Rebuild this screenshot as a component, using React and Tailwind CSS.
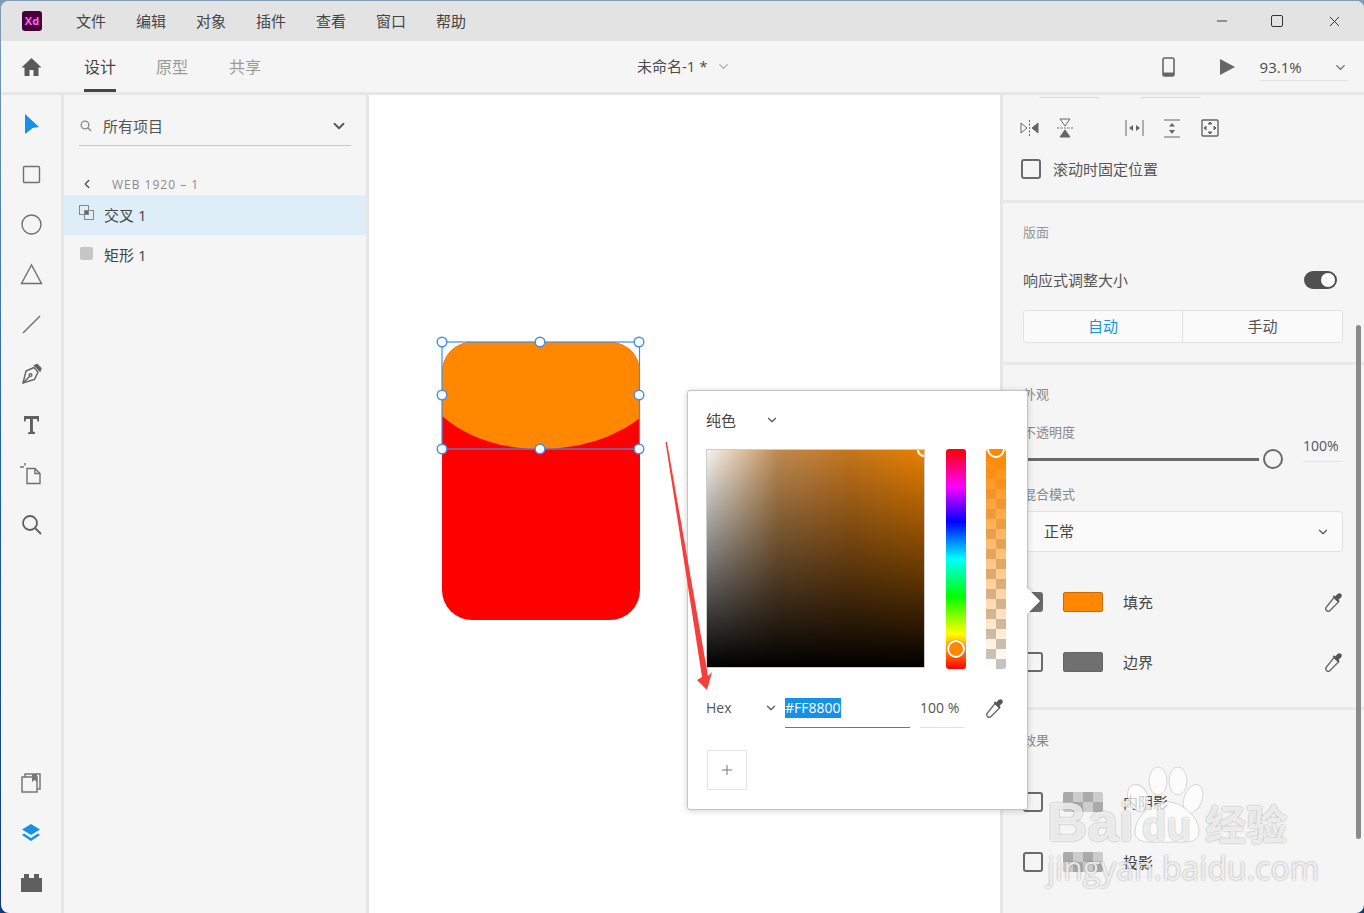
import React from 'react';
import { ChevronDown, ChevronLeft, Minus, X, Plus } from 'lucide-react';

const menus = ['文件', '编辑', '对象', '插件', '查看', '窗口', '帮助'];

function Pipette() {
  return (
    <svg width="20" height="20" viewBox="0 0 20 20" fill="none">
      <path d="M10 5.500 14.500 10 6 18.500c-1 1-2.500 1-3.500 0s-1-2.500 0-3.500z" stroke="#666" strokeWidth="1.300" />
      <path d="M8.800 4.500 10 3.300l1.200 1.200 2.300-2.500c1-1 2.600-1.100 3.600-.1s.9 2.600-.1 3.600l-2.500 2.300 1.200 1.200-1.200 1.200z" fill="#555" />
    </svg>
  );
}

function Check({ checked = false }) {
  return <div className={`w-5 h-5 shrink-0 rounded-[3px] border-2 border-[#6a6a6a] ${checked ? 'bg-[#6a6a6a]' : ''}`} />;
}

const toolIcon = {
  select: <path d="M5 1 19 14l-6.500 1-1 1L5 21z" fill="#1592e6" />,
  rect: <rect x="3.500" y="3.500" width="16" height="16" rx="1" fill="none" stroke="#707070" strokeWidth="1.400" />,
  circle: <circle cx="11.500" cy="11.500" r="9.500" fill="none" stroke="#707070" strokeWidth="1.400" />,
  triangle: <path d="M11.500 2 1.500 20.500h20z" fill="none" stroke="#707070" strokeWidth="1.400" />,
  line: <path d="M3 20 20 3" stroke="#707070" strokeWidth="1.400" />,
  pen: (
    <g fill="none" stroke="#606060" strokeWidth="1.400">
      <path d="M14 4.500 6 8 3 20l11.500-3.500L18 9z" />
      <path d="M3 20l6.500-6.500" />
      <circle cx="10.500" cy="12" r="1.400" />
      <path d="M14.500 2.500 20 8l1-2.500-3.800-4z" fill="#606060" />
    </g>
  ),
  text: <path d="M4 3h15v5.500h-1.500l-.6-2.500h-4v12.500l2 .5V21H8v-1.500l2-.5V6H6.100l-.6 2.500H4z" fill="#606060" />,
  artboard: (
    <g fill="none" stroke="#707070" strokeWidth="1.400">
      <path d="M7 5.500h8l5 5v10H7z" />
      <path d="M15 5.500v5h5" />
      <path d="M0 4h4M5 0v2.500" />
    </g>
  ),
  zoom: (
    <g fill="none" stroke="#606060" strokeWidth="1.800">
      <circle cx="10" cy="10" r="7" />
      <path d="m15 15 6 6" />
    </g>
  ),
};

function ToolButton({ icon }) {
  return (
    <div className="h-[50px] flex items-center justify-center">
      <svg width="23" height="23" viewBox="0 0 23 23">{toolIcon[icon]}</svg>
    </div>
  );
}

function PropsRow({ swatch, label, top = '', checked = false, picker = true }) {
  return (
    <div className={`flex items-center h-5 pl-5 pr-[20px] ${top}`}>
      <Check checked={checked} />
      <div className={`w-10 h-5 ml-5 rounded-[2px] ${swatch}`} />
      <span className="ml-5 text-[15px] text-[#444]">{label}</span>
      {picker && <span className="ml-auto"><Pipette /></span>}
    </div>
  );
}

const checker = 'bg-[repeating-conic-gradient(#cccccc_0_25%,#aaaaaa_0_50%)] bg-[length:20px_20px]';

export default function App() {
  return (
    <div className="relative w-[1364px] h-[913px] overflow-hidden bg-gradient-to-b from-[#7f9db5] via-[#1f5fb0] to-[#123a78] pl-px pt-px font-['Open_Sans','Noto_Sans_CJK_SC',sans-serif]">
      <div className="h-full flex flex-col rounded-lg overflow-hidden bg-[#f5f5f5]">
        {/* title bar */}
        <div className="h-10 shrink-0 bg-[#e3e3e3] flex items-center text-[15px] text-[#444]">
          <div className="ml-[21px] w-5 h-5 rounded-[3px] bg-[#470137] flex items-center justify-center text-[11px] font-bold text-[#ff61f6]">Xd</div>
          <div className="ml-[34px] flex">
            {menus.map((m) => (
              <span key={m} className="w-[60px]">{m}</span>
            ))}
          </div>
          <div className="ml-auto flex items-center text-[#333]">
            <Minus size={16} strokeWidth={1.400} className="mr-[41px]" />
            <div className="w-[12px] h-[12px] border border-[#333] rounded-[2px] mr-[43px]" />
            <X size={17} strokeWidth={1.400} className="mr-[21px]" />
          </div>
        </div>

        {/* toolbar */}
        <div className="h-[54px] shrink-0 flex items-center border-b-[3px] border-[#e6e6e6] relative">
          <svg className="ml-[20px]" width="21" height="20" viewBox="0 0 21 20">
            <path d="M10.500 1 .5 10.500h3V19h5v-6h4v6h5v-8.500h3z" fill="#5a5a5a" />
          </svg>
          <div className="ml-[42px] h-full flex items-center relative text-base text-[#444]">
            <span>设计</span>
            <div className="absolute left-0 right-0 bottom-0 h-[3px] bg-[#444]" />
          </div>
          <span className="ml-10 text-base text-[#9a9a9a]">原型</span>
          <span className="ml-[41px] text-base text-[#9a9a9a]">共享</span>
          <span className="ml-[376px] text-[15px] text-[#4b4b4b]">未命名-1 *</span>
          <ChevronDown size={15} className="ml-2 text-[#aaa]" />
          <svg className="ml-[431px]" width="14" height="20" viewBox="0 0 14 20">
            <rect x="1" y="1" width="11" height="18" rx="1.500" fill="none" stroke="#666" strokeWidth="1.600" />
            <path d="M1 15.500h11v2.500a1 1 0 0 1-1 1H2a1 1 0 0 1-1-1z" fill="#666" />
          </svg>
          <svg className="ml-[43px]" width="17" height="18" viewBox="0 0 17 18">
            <path d="M1 1v16l15-8z" fill="#666" />
          </svg>
          <div className="ml-6 w-[88px] h-[26px] flex items-center justify-between border-b border-[#e2e2e2] self-end mb-[11px] text-[15px] text-[#4b4b4b]">
            <span>93.1%</span>
            <ChevronDown size={15} className="text-[#666]" />
          </div>
        </div>

        {/* main */}
        <div className="flex-1 flex min-h-0">
          {/* tools */}
          <div className="w-[60px] shrink-0 flex flex-col pt-1">
            {['select', 'rect', 'circle', 'triangle', 'line', 'pen', 'text', 'artboard', 'zoom'].map((t) => (
              <ToolButton key={t} icon={t} />
            ))}
            <div className="mt-auto pb-[5px] flex flex-col">
              <div className="h-[50px] flex items-center justify-center">
                <svg width="20" height="20" viewBox="0 0 20 20" fill="none" stroke="#777" strokeWidth="1.500">
                  <path d="M4 4V1h15v15h-3" />
                  <rect x="1" y="4" width="15" height="15" />
                  <path d="M11 1h5v8l-2.500-2L11 9z" fill="#777" stroke="none" />
                </svg>
              </div>
              <div className="h-[50px] flex items-center justify-center">
                <svg width="20" height="20" viewBox="0 0 20 20">
                  <path d="M10 1 19 6.500 10 12 1 6.500z" fill="#1592e6" />
                  <path d="M3 10.500 10 15l7-4.500 2 1.500-9 6-9-6z" fill="#1592e6" />
                </svg>
              </div>
              <div className="h-[50px] flex items-center justify-center">
                <svg width="23" height="20" viewBox="0 0 23 20">
                  <path d="M1 19V5h3V1h5v4h5V1h5v4h3v14z" fill="#5f5f5f" />
                </svg>
              </div>
            </div>
          </div>
          <div className="w-[3px] shrink-0 bg-[#e6e6e6]" />

          {/* layers */}
          <div className="w-[302px] shrink-0">
            <div className="mx-[15px] mt-[15px] h-9 flex items-center border-b border-[#c8c8c8] pb-[3px]">
              <svg width="12" height="12" viewBox="0 0 12 12" fill="none" stroke="#888" strokeWidth="1.300" className="ml-px">
                <circle cx="5" cy="5" r="3.800" />
                <path d="m8 8 3 3" />
              </svg>
              <span className="ml-[11px] text-[15px] text-[#555]">所有项目</span>
              <ChevronDown size={18} strokeWidth={2.400} className="ml-auto mr-[3px] text-[#555]" />
            </div>
            <div className="h-[49px] flex items-end pb-[2px] pl-[16px]">
              <ChevronLeft size={14} strokeWidth={2.400} className="text-[#555] mb-[2px]" />
              <span className="ml-[18px] text-xs tracking-[1px] text-[#8a8a8a]">WEB 1920 – 1</span>
            </div>
            <div className="h-10 bg-[#deeef9] flex items-center pl-[15px] text-[15px] text-[#444]">
              <svg width="16" height="16" viewBox="0 0 16 16" fill="none" stroke="#888" strokeWidth="1" className="mb-1">
                <rect x="0.500" y="0.500" width="9" height="9" />
                <rect x="5.500" y="5.500" width="9" height="9" />
                <rect x="5.500" y="5.500" width="4" height="4" fill="#666" />
              </svg>
              <span className="ml-[9px]">交叉 1</span>
            </div>
            <div className="h-10 flex items-center pl-[16px] text-[15px] text-[#444]">
              <div className="w-[13px] h-[13px] rounded-[2px] bg-[#c6c6c6] mb-1" />
              <span className="ml-[11px]">矩形 1</span>
            </div>
          </div>
          <div className="w-[3px] shrink-0 bg-[#e6e6e6]" />

          {/* canvas */}
          <div className="relative w-[631px] shrink-0 bg-white">
            <svg className="absolute left-[61px] top-[235px]" width="220" height="300" viewBox="430 330 220 300">
              <rect x="442" y="342" width="198" height="278" rx="30" fill="#ff0000" />
              <path d="M442 416V372a30 30 0 0 1 30-30h138a30 30 0 0 1 30 30v46C616 437 580 449 540 449S466 437 442 416z" fill="#ff8800" />
              <rect x="442" y="342" width="197.500" height="107" fill="none" stroke="#3f8fe8" strokeWidth="1.200" />
              {[[442, 342], [540, 342], [639, 342], [442, 395], [639, 395], [442, 449], [540, 449], [639, 449]].map(([cx, cy]) => (
                <circle key={`${cx}-${cy}`} cx={cx} cy={cy} r="4.800" fill="#fff" stroke="#3f8fe8" strokeWidth="1.400" />
              ))}
            </svg>
          </div>
          <div className="w-[3px] shrink-0 bg-[#e6e6e6]" />

          {/* properties */}
          <div className="flex-1 min-w-0 text-[#555]">
            <div className="h-[108px] border-b-[3px] border-[#e8e8e8]">
              <div className="flex pt-[2px] pl-[36px]">
                <div className="w-[60px] h-px bg-[#dcdcdc]" />
                <div className="ml-[42px] w-[60px] h-px bg-[#dcdcdc]" />
              </div>
              <div className="flex items-center mt-5 pl-[17px]">
                <svg width="19" height="16" viewBox="0 0 19 16" fill="none" stroke="#666">
                  <path d="M1 3v10l6-5z" />
                  <path d="M18 3v10l-6-5z" fill="#666" />
                  <path d="M9.500 0v16" strokeDasharray="2 1.500" />
                </svg>
                <svg className="ml-[18px]" width="16" height="20" viewBox="0 0 16 20" fill="none" stroke="#666">
                  <path d="M3 1h10L8 8z" />
                  <path d="M3 19h10l-5-7z" fill="#666" />
                  <path d="M0 10h16" strokeDasharray="2 1.500" />
                </svg>
                <svg className="ml-[52px]" width="19" height="16" viewBox="0 0 19 16" fill="#666">
                  <path d="M.5 0h1v16h-1zM17.500 0h1v16h-1zM8 5v6L4 8zM11 5v6l4-3z" />
                </svg>
                <svg className="ml-[20px]" width="16" height="19" viewBox="0 0 16 19" fill="#666">
                  <path d="M0 .5h16v1H0zM0 17.500h16v1H0zM5 7.500h6L8 4zM5 11h6l-3 4z" />
                </svg>
                <svg className="ml-[21px]" width="18" height="18" viewBox="0 0 18 18" fill="none" stroke="#666">
                  <rect x="1" y="1" width="16" height="16" rx="1" strokeWidth="1.400" />
                  <path d="M7 5h4L9 3zM7 13h4l-2 2zM5 7v4L3 9zM13 7v4l2-2z" fill="#666" />
                </svg>
              </div>
              <div className="flex items-center mt-5 pl-[18px]">
                <Check />
                <span className="ml-[12px] text-[15px]">滚动时固定位置</span>
              </div>
            </div>

            <div className="h-[162px] border-b-[3px] border-[#e8e8e8] px-5 pt-[19px]">
              <div className="text-[13px] text-[#999] leading-5">版面</div>
              <div className="flex items-center justify-between mt-7 h-5">
                <span className="text-[15px]">响应式调整大小</span>
                <div className="mr-[7px] w-[33px] h-[18px] rounded-full bg-[#505050] flex items-center justify-end pr-[2px]">
                  <div className="w-[14px] h-[14px] rounded-full bg-white" />
                </div>
              </div>
              <div className="mt-5 h-[33px] w-[320px] flex border border-[#e2e2e2] rounded-[3px] bg-[#fafafa] text-[15px]">
                <div className="w-[159px] flex items-center justify-center border-r border-[#e2e2e2] text-[#1592e6]">自动</div>
                <div className="flex-1 flex items-center justify-center text-[#555]">手动</div>
              </div>
            </div>

            <div className="h-[345px] border-b-[3px] border-[#e8e8e8] pt-[19px]">
              <div className="px-5 text-[13px] text-[#888] leading-5">外观</div>
              <div className="px-5 mt-[18px] text-[13px] text-[#888] leading-5">不透明度</div>
              <div className="flex pl-5 pr-[20px] h-6 items-center mt-[5px]">
                <div className="w-[236px] h-[3px] bg-[#6a6a6a]" />
                <div className="ml-[4px] w-5 h-5 rounded-full border-2 border-[#6a6a6a] bg-[#f5f5f5]" />
                <div className="ml-[20px] w-10 h-[32px] -mt-[26px] border-b border-[#e4e4e4] text-sm flex items-center">100%</div>
              </div>
              <div className="px-5 mt-[13px] text-[13px] text-[#888] leading-5">混合模式</div>
              <div className="mx-5 mt-[7px] h-[41px] w-[320px] border border-[#e2e2e2] rounded-[4px] bg-[#fafafa] flex items-center justify-between pl-5 pr-[12px] text-[15px] text-[#444]">
                <span>正常</span>
                <ChevronDown size={14} strokeWidth={2} className="text-[#555]" />
              </div>
              <PropsRow top="mt-10" checked swatch="bg-[#ff8800] border border-[#c96b00]" label="填充" />
              <PropsRow top="mt-10" swatch="bg-[#707070] border border-[#666]" label="边界" />
            </div>

            <div className="pt-5">
              <div className="px-5 text-[13px] text-[#888] leading-5">效果</div>
              <PropsRow top="mt-[42px]" picker={false} swatch={checker} label="内阴影" />
              <PropsRow top="mt-10" picker={false} swatch={checker} label="投影" />
            </div>
          </div>
        </div>
      </div>

      {/* scrollbar */}
      <div className="absolute left-[1356px] top-[325px] w-[5px] h-[514px] rounded-full bg-[#8a8a8a]" />

      {/* colour popover */}
      <div className="absolute left-[687px] top-[390px] w-[341px] h-[420px] bg-white border border-[#c4c4c4] rounded-[3px] shadow-[0_1px_6px_rgba(0,0,0,0.18)]">
        <div className="absolute -right-[9px] top-[200px] w-[20px] h-[20px] rotate-45 bg-white shadow-[2px_-2px_3px_rgba(0,0,0,0.08)]" />
        <div className="relative pl-[18px]">
          <div className="h-[58px] flex items-center text-[15px] text-[#444]">
            <span className="w-[59px]">纯色</span>
            <ChevronDown size={14} strokeWidth={2} className="text-[#555]" />
          </div>
          <div className="flex items-start">
            <div className="relative w-[219px] h-[219px] border border-[#ccc] overflow-hidden bg-[linear-gradient(to_top,#000,rgba(0,0,0,0)),linear-gradient(to_right,#f7f3ee,#bd8a50_33%,#c4751c_66%,#ea8000)]">
              <div className="absolute -right-[7px] -top-[7px] w-[14px] h-[14px] rounded-full border-2 border-white bg-[#ff8800]" />
            </div>
            <div className="relative ml-[21px] w-5 h-[220px] rounded-[3px] bg-[linear-gradient(to_bottom,#f00,#f0f_17%,#00f_33%,#0ff_50%,#0f0_67%,#ff0_84%,#f00)]">
              <div className="absolute left-px top-[191px] w-[18px] h-[18px] rounded-full border-2 border-white bg-[#ff8800] shadow-[0_0_1px_rgba(0,0,0,0.6)]" />
            </div>
            <div className="relative ml-5 w-5 h-[220px] rounded-[3px] overflow-hidden bg-[linear-gradient(to_bottom,#ff8800,rgba(255,136,0,0)),repeating-conic-gradient(#fff_0_25%,#c4c4c4_0_50%)] bg-[length:100%_100%,20px_20px]">
              <div className="absolute left-px -top-[9px] w-[18px] h-[18px] rounded-full border-2 border-white bg-[#ff8800]" />
            </div>
          </div>
          <div className="mt-[20px] flex items-start h-[40px] text-sm text-[#555]">
            <div className="w-[58px] h-[38px] flex items-center">Hex</div>
            <div className="w-[20px] h-[38px] flex items-center">
              <ChevronDown size={14} strokeWidth={2} className="text-[#555]" />
            </div>
            <div className="ml-px w-[125px] h-[39px] flex items-center border-b border-[#1592e6]">
              <span className="bg-[#1592e6] text-white h-5 leading-5">#FF8800</span>
            </div>
            <div className="ml-[10px] w-[45px] h-[39px] flex items-center border-b border-[#e2e2e2]">100 %</div>
            <div className="ml-5 mt-[9px]"><Pipette /></div>
          </div>
          <div className="mt-[21px] ml-px w-10 h-10 border border-[#e4e4e4] flex items-center justify-center">
            <Plus size={16} strokeWidth={1.200} className="text-[#555]" />
          </div>
        </div>
      </div>

      {/* annotation arrow */}
      <svg className="absolute left-[660px] top-[436px]" width="60" height="260" viewBox="660 436 60 260">
        <path d="M665.500 442 667 442 708 676 712 672 707 690 697 680 702 677z" fill="#f73e3e" />
      </svg>

      {/* watermark */}
      <div className="absolute left-[1047px] top-[766px] w-[250px] h-[125px] pointer-events-none text-white/80 [text-shadow:0_0_2px_rgba(0,0,0,0.4)]">
        <svg className="absolute left-[78px] top-0" width="82" height="78" viewBox="0 0 82 78" fill="#fff" fillOpacity="0.7" stroke="#000" strokeOpacity="0.14">
          <ellipse cx="13" cy="32" rx="10" ry="14" transform="rotate(-20 13 32)" />
          <ellipse cx="33" cy="15" rx="9" ry="14" />
          <ellipse cx="53" cy="15" rx="9" ry="14" />
          <ellipse cx="68" cy="33" rx="9" ry="15" transform="rotate(20 68 33)" />
          <path d="M10 66c0-15 16-30 32-30s32 15 32 30c0 7-6 10-14 10H24c-8 0-14-3-14-10z" />
        </svg>
        <span className="absolute left-0 top-[24px] text-[56px] leading-[64px] font-bold font-['Liberation_Sans',sans-serif]">Bai</span>
        <span className="absolute left-[95px] top-[36px] text-[40px] leading-[48px] font-bold font-['Liberation_Sans',sans-serif]">du</span>
        <span className="absolute left-[158px] top-[30px] text-[41px] leading-[52px] font-bold font-['Noto_Sans_CJK_SC',sans-serif]">经验</span>
        <span className="absolute left-0 top-[82px] text-[32px] leading-[40px] font-['Open_Sans',sans-serif]">jingyan.baidu.com</span>
      </div>
    </div>
  );
}
